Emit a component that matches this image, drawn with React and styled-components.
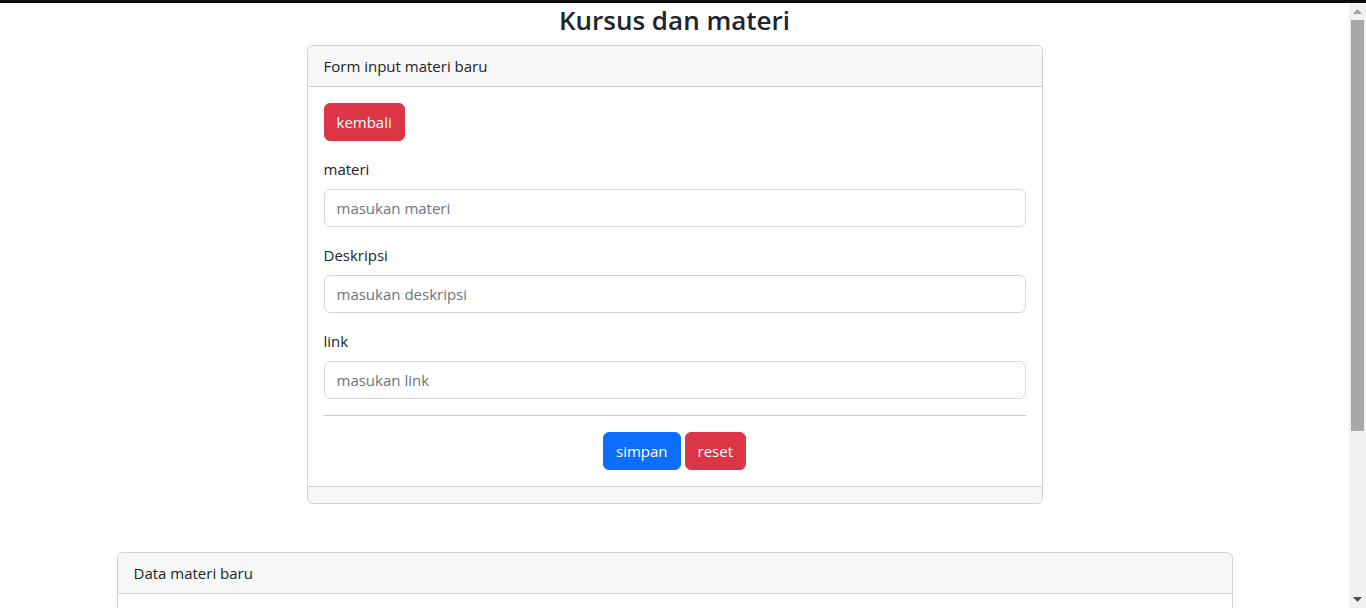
import React from "react";
import styled, { createGlobalStyle } from "styled-components";

const GlobalStyle = createGlobalStyle`
  html, body { margin: 0; padding: 0; overflow: hidden; background: #fff; }
  body {
    font-family: "Open Sans", "Noto Sans", sans-serif;
    font-size: 15px;
    line-height: 24px;
    color: #212529;
  }
  * { box-sizing: border-box; }
`;

const Screen = styled.div`
  display: flex;
  flex-direction: column;
  height: 608px;
`;

const TopBar = styled.div`
  height: 3px;
  background: #0d0d0d;
  flex: none;
`;

const Viewport = styled.div`
  flex: 1;
  display: flex;
  min-height: 0;
`;

const Main = styled.main`
  flex: 1;
  overflow: hidden;
`;

const Scrollbar = styled.div`
  width: 17px;
  flex: none;
  background: #f1f1f1;
  display: flex;
  flex-direction: column;
  align-items: center;
`;

const ArrowBox = styled.div`
  height: 17px;
  width: 17px;
  flex: none;
  display: flex;
  align-items: center;
  justify-content: center;
`;

const Thumb = styled.div`
  width: 13px;
  height: 411px;
  background: #a8a8a8;
  flex: none;
`;

const Track = styled.div`
  flex: 1;
`;

const Container = styled.div`
  max-width: 1140px;
  margin: 0 auto;
  padding: 0 12px;
`;

const Title = styled.h2`
  margin: 0 0 7px;
  text-align: center;
  font-size: 26px;
  line-height: 35px;
  font-weight: 600;
  color: #212529;
`;

const Card = styled.section`
  border: 1px solid rgba(0, 0, 0, 0.175);
  border-radius: 6px;
  background: #fff;
  overflow: hidden;
  width: ${(p) => p.$width || "100%"};
  margin: 0 auto ${(p) => p.$mb || "0"};
`;

const CardHeader = styled.div`
  padding: 8px 16px;
  background: #f7f7f7;
  border-bottom: 1px solid rgba(0, 0, 0, 0.175);
`;

const CardBody = styled.div`
  padding: 16px;
  min-height: ${(p) => p.$minHeight || "0"};
`;

const CardFooter = styled.div`
  height: 16px;
  background: #f7f7f7;
  border-top: 1px solid rgba(0, 0, 0, 0.175);
  box-sizing: content-box;
`;

const Button = styled.button`
  display: inline-block;
  font-family: inherit;
  font-size: 15px;
  line-height: 24px;
  padding: 6px 12px;
  border: 1px solid ${(p) => (p.$variant === "primary" ? "#0d6efd" : "#dc3545")};
  background: ${(p) => (p.$variant === "primary" ? "#0d6efd" : "#dc3545")};
  color: #fff;
  border-radius: 6px;
  cursor: pointer;
`;

const Field = styled.div`
  margin-top: 16px;
`;

const Label = styled.label`
  display: block;
  margin-bottom: 8px;
`;

const Input = styled.input`
  display: block;
  width: 100%;
  height: 38px;
  padding: 6px 12px;
  font-family: inherit;
  font-size: 15px;
  line-height: 24px;
  color: #212529;
  border: 1px solid #d3d7dc;
  border-radius: 6px;
  background: #fff;
  outline: none;
  &::placeholder { color: #6c757d; }
`;

const Divider = styled.hr`
  margin: 16px 0;
  border: 0;
  border-top: 1px solid #212529;
  opacity: 0.25;
`;

const Actions = styled.div`
  display: flex;
  justify-content: center;
  gap: 4px;
`;

const Upper = () => (
  <svg width="9" height="5" viewBox="0 0 9 5"><path d="M4.5 0 L9 5 L0 5 Z" fill="#a3a3a3" /></svg>
);
const Lower = () => (
  <svg width="9" height="5" viewBox="0 0 9 5"><path d="M0 0 L9 0 L4.5 5 Z" fill="#505050" /></svg>
);

export default function App() {
  return (
    <>
      <GlobalStyle />
      <Screen>
        <TopBar />
        <Viewport>
          <Main>
            <Container>
              <Title>Kursus dan materi</Title>
              <Card $width="736px" $mb="48px">
                <CardHeader>Form input materi baru</CardHeader>
                <CardBody>
                  <Button $variant="danger">kembali</Button>
                  <Field>
                    <Label>materi</Label>
                    <Input placeholder="masukan materi" />
                  </Field>
                  <Field>
                    <Label>Deskripsi</Label>
                    <Input placeholder="masukan deskripsi" />
                  </Field>
                  <Field>
                    <Label>link</Label>
                    <Input placeholder="masukan link" />
                  </Field>
                  <Divider />
                  <Actions>
                    <Button $variant="primary">simpan</Button>
                    <Button $variant="danger">reset</Button>
                  </Actions>
                </CardBody>
                <CardFooter />
              </Card>
              <Card>
                <CardHeader>Data materi baru</CardHeader>
                <CardBody $minHeight="200px" />
              </Card>
            </Container>
          </Main>
          <Scrollbar>
            <ArrowBox><Upper /></ArrowBox>
            <Thumb />
            <Track />
            <ArrowBox><Lower /></ArrowBox>
          </Scrollbar>
        </Viewport>
      </Screen>
    </>
  );
}
